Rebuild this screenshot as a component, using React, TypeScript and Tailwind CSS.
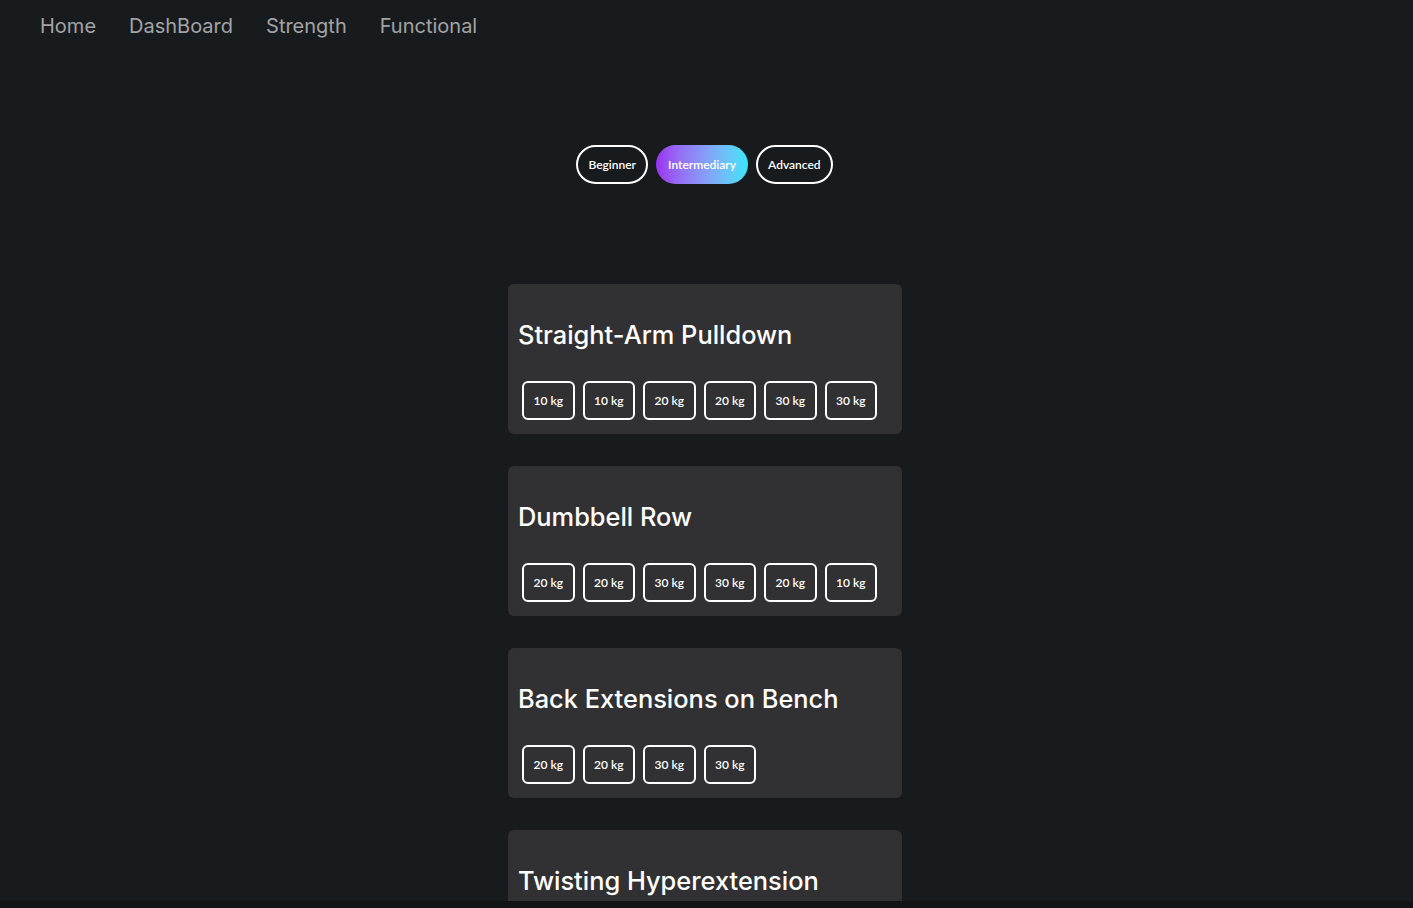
import React, { useState } from "react";

const levels = ["Beginner", "Intermediary", "Advanced"];

const exercises = [
  { id: 1, name: "Straight-Arm Pulldown", weights: [10, 10, 20, 20, 30, 30] },
  { id: 2, name: "Dumbbell Row", weights: [20, 20, 30, 30, 20, 10] },
  { id: 3, name: "Back Extensions on Bench", weights: [20, 20, 30, 30] },
  { id: 4, name: "Twisting Hyperextension", weights: [] as number[] },
];

const navLinks = ["Home", "DashBoard", "Strength", "Functional"];

const App = () => {
  const [level, setLevel] = useState("Intermediary");

  return (
    <div className="bg-[#181b1d]">
      <div className="h-[901px] overflow-hidden">
        {/* Navbar */}
        <nav className="flex gap-[33px] pl-[40px] pt-[12px] font-['Inter',sans-serif] text-[20px] text-[#a3a3a6]">
          {navLinks.map((item) => (
            <a key={item} href="#" className="leading-[28px] hover:text-white">
              {item}
            </a>
          ))}
        </nav>

        {/* Level selector */}
        <div className="mt-[105px] flex justify-center gap-2 pr-[4px] font-['Lato',sans-serif] text-[12px] font-semibold text-white">
          {levels.map((l) =>
            l === level ? (
              <button
                key={l}
                onClick={() => setLevel(l)}
                className="h-[39px] rounded-full bg-gradient-to-r from-[#9a2ff0] to-[#2fe6f8] px-[12px]"
              >
                {l}
              </button>
            ) : (
              <button
                key={l}
                onClick={() => setLevel(l)}
                className="h-[39px] rounded-full border-2 border-white px-[10px]"
              >
                {l}
              </button>
            )
          )}
        </div>

        {/* Exercise cards */}
        <div className="mt-[100px] flex flex-col items-center gap-8 pr-[3px]">
          {exercises.map((ex) => (
            <div
              key={ex.id}
              className="w-[394px] shrink-0 rounded-md bg-[#313133] px-[10px] pt-[31px] pb-[14px]"
            >
              <h2 className="font-['Inter',sans-serif] text-[25.4px] font-medium leading-[40px] text-white">
                {ex.name}
              </h2>
              {ex.weights.length > 0 && (
                <div className="mt-[26px] flex gap-2 pl-[4px] font-['Lato',sans-serif] text-[12px] font-semibold text-white">
                  {ex.weights.map((w, i) => (
                    <span
                      key={i}
                      className="flex h-[39px] w-[52.5px] items-center justify-center rounded-md border-2 border-white"
                    >
                      {w} kg
                    </span>
                  ))}
                </div>
              )}
            </div>
          ))}
        </div>
      </div>
      <div className="h-[7px] bg-[#111315]" />
    </div>
  );
};

export default App;
